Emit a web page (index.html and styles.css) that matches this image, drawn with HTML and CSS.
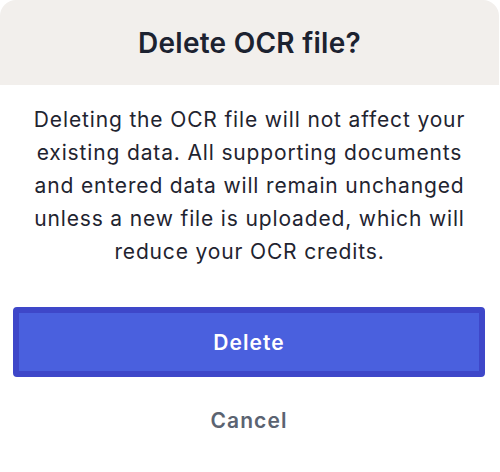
FILE: index.html
```html
<!DOCTYPE html>
<html lang="en">
<head>
  <meta charset="UTF-8">
  <title>Delete OCR file</title>
  <link rel="stylesheet" href="styles.css">
</head>
<body>
  <div class="dialog">
    <div class="dialog-header">
      <h2>Delete OCR file?</h2>
    </div>
    <p class="dialog-text">
      Deleting the OCR file will not affect your existing data. All supporting documents and entered data will remain unchanged unless a new file is uploaded, which will reduce your OCR credits.
    </p>
    <div class="dialog-actions">
      <button class="btn-delete">Delete</button>
      <button class="btn-cancel">Cancel</button>
    </div>
  </div>
</body>
</html>
```

FILE: styles.css
```css
html, body {
  margin: 0;
  background-color: #fff;
}
body {
  font-family: Inter, "Noto Sans", sans-serif;
  color: #1d2331;
}
.dialog {
  width: 499px;
  background-color: #fff;
  border-radius: 16px 16px 0 0;
  overflow: hidden;
}
.dialog-header {
  height: 85px;
  display: flex;
  align-items: center;
  justify-content: center;
  background-color: #f2efec;
}
.dialog-header h2 {
  margin: 0;
  font-size: 28px;
  font-weight: 600;
  letter-spacing: 0.25px;
  color: #1c2230;
}
.dialog-text {
  margin: 0;
  padding: 18px 24px 0;
  text-align: center;
  font-size: 21px;
  line-height: 33px;
  letter-spacing: 0.85px;
  color: #1f2430;
}
.dialog-actions {
  display: flex;
  flex-direction: column;
  padding: 39px 14px 0 13px;
}
.btn-delete {
  height: 70px;
  border: 6px solid #3e47c9;
  border-radius: 4px;
  background-color: #4a60de;
  color: #fff;
  font-family: inherit;
  font-size: 21px;
  font-weight: 600;
  letter-spacing: 1.1px;
  cursor: pointer;
}
.btn-cancel {
  margin-top: 28px;
  height: 30px;
  border: none;
  background: none;
  color: #5b6371;
  font-family: inherit;
  font-size: 21px;
  font-weight: 600;
  letter-spacing: 1.1px;
  cursor: pointer;
}
```
